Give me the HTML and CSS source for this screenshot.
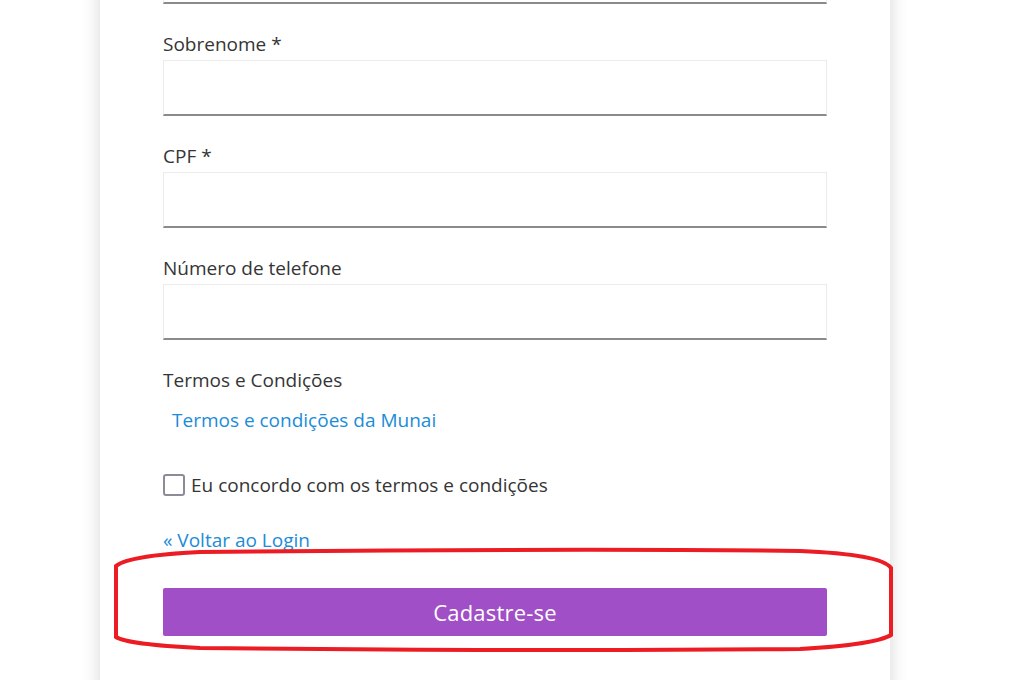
FILE: index.html
```html
<!DOCTYPE html>
<html lang="pt-BR">
<head>
<meta charset="utf-8">
<title>Cadastre-se</title>
<link rel="stylesheet" href="styles.css">
</head>
<body>
<div class="page">
  <div class="card">
    <form class="form">
      <div class="field field-cut">
        <div class="input"></div>
      </div>
      <div class="field">
        <label class="label">Sobrenome *</label>
        <div class="input"></div>
      </div>
      <div class="field">
        <label class="label">CPF *</label>
        <div class="input"></div>
      </div>
      <div class="field">
        <label class="label">Número de telefone</label>
        <div class="input"></div>
      </div>
      <div class="terms">
        <div class="label">Termos e Condições</div>
        <a class="terms-link" href="#">Termos e condições da Munai</a>
      </div>
      <label class="check-row">
        <span class="checkbox"></span>
        <span>Eu concordo com os termos e condições</span>
      </label>
      <a class="back-link" href="#">« Voltar ao Login</a>
      <button type="button" class="submit">Cadastre-se</button>
    </form>
  </div>
</div>
<svg class="annotation" width="1032" height="680" viewBox="0 0 1032 680">
  <path d="M200 552 C 400 550, 650 549, 800 551 C 850 553, 884 558, 891 568 L 891 635 C 880 642, 850 646, 800 649 C 600 651, 400 650, 200 648 C 160 646, 125 643, 116 637 L 116 566 C 125 558, 160 554, 200 552 Z" fill="none" stroke="#ec1c24" stroke-width="4"/>
</svg>
</body>
</html>
```

FILE: styles.css
```css
html, body {
  margin: 0;
  padding: 0;
  background: #ffffff;
  height: 680px;
  overflow: hidden;
}
body {
  font-family: "Open Sans", "Liberation Sans", sans-serif;
  color: #353535;
  position: relative;
}
.page {
  padding-left: 100px;
  width: 790px;
}
.card {
  background: #fff;
  box-shadow: 0 0 18px rgba(0, 0, 0, 0.16);
  margin-top: -52px;
  padding: 0 63px 60px;
  min-height: 800px;
}
.form {
  display: flex;
  flex-direction: column;
}
.field {
  display: flex;
  flex-direction: column;
  margin-bottom: 28px;
}
.label {
  font-size: 19px;
  line-height: 24px;
  margin-bottom: 4px;
  display: block;
}
.input {
  border: 1px solid #ececec;
  border-bottom: 2px solid #8a8a8a;
  box-sizing: content-box;
  height: 53px;
}
.terms {
  display: flex;
  flex-direction: column;
}
.terms .label {
  margin-bottom: 16px;
}
.terms-link {
  font-size: 19px;
  line-height: 24px;
  color: #1a8cd8;
  text-decoration: none;
  padding-left: 9px;
}
.check-row {
  display: flex;
  align-items: center;
  gap: 6px;
  font-size: 19px;
  line-height: 24px;
  margin-top: 41px;
}
.checkbox {
  width: 18px;
  height: 18px;
  border: 2px solid #8c8c98;
  border-radius: 3px;
  flex: none;
}
.back-link {
  font-size: 19px;
  line-height: 24px;
  color: #1a8cd8;
  text-decoration: none;
  margin-top: 31px;
  align-self: flex-start;
}
.submit {
  margin-top: 36px;
  height: 48px;
  border: none;
  border-radius: 2px;
  background: #a04fc6;
  color: #fff;
  font-family: "Open Sans", "Liberation Sans", sans-serif;
  font-size: 22px;
  letter-spacing: 0.2px;
  cursor: pointer;
}
.annotation {
  position: absolute;
  left: 0;
  top: 0;
  pointer-events: none;
}
```
